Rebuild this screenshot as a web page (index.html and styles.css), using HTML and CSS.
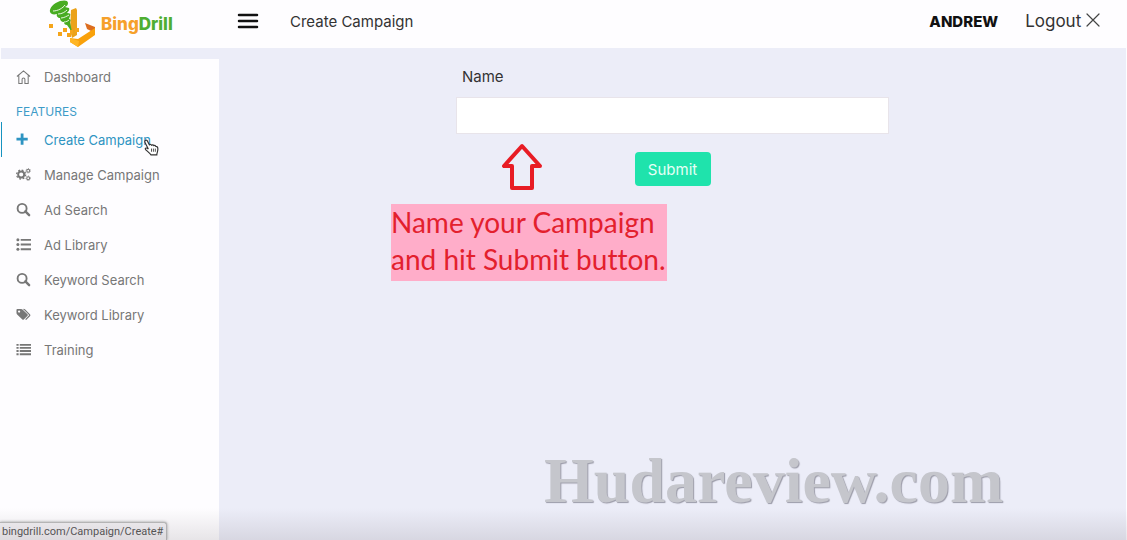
FILE: index.html
```html
<!DOCTYPE html>
<html lang="en">
<head>
  <meta charset="UTF-8">
  <meta name="viewport" content="width=device-width, initial-scale=1.0">
  <title>Create Campaign - BingDrill</title>
  <link rel="stylesheet" href="styles.css">
</head>
<body>

<header class="topbar">
  <a class="brand" href="#">
    <svg class="brand-logo" width="50" height="48" viewBox="0 0 50 48" aria-hidden="true">
      <path d="M22 10l5-2 1 2v25l-5 3-2-8z" fill="#eba21a"/>
      <path d="M36 23l10 4v6l-8-4z" fill="#dc6d20"/>
      <path d="M21 38l8 1 17-11v7L29 47l-8-5z" fill="#f9a10b"/>
      <path d="M21 38l9 3-1 6-8-5z" fill="#ffb524"/>
      <path d="M1 12C0 8 5 3 11 1c4-1 8-1 8 2 0 2-1 3-3 4l4 1c1 2-1 4-2 5 3 0 4 1 3 3l-1 3c2 0 2 2 1 3l2 10-5-7c-2 0-3-1-3-3-3 0-4-2-4-4-2 0-4-2-3-4-4 1-6 0-7-2z" fill="#48ac22"/>
      <path d="M4 11c5 0 10-3 12-6M9 14c4 0 7-2 9-4M12 18c3 0 6-2 8-3M15 22c2 0 4-1 5-2" fill="none" stroke="#e8f6df" stroke-width="1"/>
      <path d="M0 24h4v4H0zM9 32h4v4H9zM14 28h4v4h-4zM18 33h4v4h-4zM26 28h4v4h-4zM21 30h3v4h-3z" fill="#f5a51b"/>
    </svg>
    <span class="brand-name">Bing<span>Drill</span></span>
  </a>
  <button class="menu-toggle" type="button" aria-label="Toggle menu">
    <svg width="22" height="16" viewBox="0 0 22 16">
      <path d="M2 2h18M2 8h18M2 14h18" stroke="#111" stroke-width="2.500" stroke-linecap="round"/>
    </svg>
  </button>
  <h1>Create Campaign</h1>
  <div class="account">
    <strong>ANDREW</strong>
    <a href="#">Logout
      <svg width="14" height="14" viewBox="0 0 14 14" aria-hidden="true">
        <path d="M1 1l12 12M13 1L1 13" stroke="#444" stroke-width="1.200" stroke-linecap="round"/>
      </svg>
    </a>
  </div>
</header>

<div class="page">
  <nav class="sidebar">
    <a href="#">
      <svg viewBox="0 0 16 16"><path d="M1 8 8 2l7 6M3 7v8.500h3.500V11a1.500 1.500 0 0 1 3 0v4.500H13V7" fill="none" stroke="currentColor" stroke-width="1.100"/></svg>
      Dashboard
    </a>
    <h2>FEATURES</h2>
    <a class="active" href="#">
      <svg viewBox="0 0 16 16"><path d="M6.500 1.500v12M.5 7.500h12" stroke="currentColor" stroke-width="3"/></svg>
      <span class="hovered">Create Campaign
        <svg class="cursor" viewBox="0 0 14 16"><path d="M1 1.500c1-1 2 0 2.500 1L5 5.500c1-.8 1.800-.3 2 .3.900-.6 1.700-.2 2 .4 1-.4 1.700.1 2 .7 1.600-.1 2 1.200 2 2.600 0 2.500-1 3.500-1 5.500H6.500C5 13 3 11.500 1.500 10c-1-1.200.2-2 1.500-1.200l1 .7L1 3.500c-.4-.8-.4-1.500 0-2z" fill="#fff" stroke="#333" stroke-width="1.100"/><path d="M7 9v3M8.800 9v3M10.600 9v3" stroke="#333" stroke-width=".8"/></svg>
      </span>
    </a>
    <a href="#">
      <svg viewBox="0 0 16 16"><g fill="none" stroke="currentColor"><circle cx="5.500" cy="8" r="3.200" stroke-width="2"/><circle cx="5.500" cy="8" r="4.800" stroke-width="1.400" stroke-dasharray="1.900 1.870"/><circle cx="13" cy="4" r="1.500" stroke-width="1.100"/><circle cx="13" cy="4" r="2.400" stroke-width=".8" stroke-dasharray="1 1"/><circle cx="13" cy="12" r="1.500" stroke-width="1.100"/><circle cx="13" cy="12" r="2.400" stroke-width=".8" stroke-dasharray="1 1"/></g></svg>
      Manage Campaign
    </a>
    <a href="#">
      <svg viewBox="0 0 16 16"><path d="M10 10l4 4" stroke="currentColor" stroke-width="2.600" stroke-linecap="round"/><circle cx="6.500" cy="6.800" r="4.800" fill="none" stroke="currentColor" stroke-width="2"/></svg>
      Ad Search
    </a>
    <a href="#">
      <svg viewBox="0 0 16 16"><path d="M5 3h11M5 8h11M5 13h11" stroke="currentColor" stroke-width="2"/><g fill="currentColor"><circle cx="2" cy="3" r="1.600"/><circle cx="2" cy="8" r="1.600"/><circle cx="2" cy="13" r="1.600"/></g></svg>
      Ad Library
    </a>
    <a href="#">
      <svg viewBox="0 0 16 16"><path d="M10 10l4 4" stroke="currentColor" stroke-width="2.600" stroke-linecap="round"/><circle cx="6.500" cy="6.800" r="4.800" fill="none" stroke="currentColor" stroke-width="2"/></svg>
      Keyword Search
    </a>
    <a href="#">
      <svg viewBox="0 0 16 16"><path fill-rule="evenodd" d="M.5 3c0-.6.400-1 1-1h4c.5 0 1 .2 1.400.6l5.400 5.200c.5.500.5 1 0 1.500l-4 4c-.5.500-1 .5-1.500 0L1.200 8C.8 7.600.5 7 .5 6.500zM3.300 6a1.200 1.200 0 1 0 0-2.400 1.200 1.200 0 0 0 0 2.400z" fill="currentColor"/><path d="M8 2.500c.6 0 1 .2 1.400.6l5 5c.4.400.4.800 0 1.200L10.300 13.500" fill="none" stroke="currentColor" stroke-width="1.300"/></svg>
      Keyword Library
    </a>
    <a href="#">
      <svg viewBox="0 0 16 16"><path d="M4 3h12M4 6.300h12M4 9.600h12M4 13h12" stroke="currentColor" stroke-width="2"/><path d="M.5 3h2.300M.5 6.300h2.300M.5 9.600h2.300M.5 13h2.300" stroke="currentColor" stroke-width="2"/></svg>
      Training
    </a>
  </nav>

  <main>
    <form class="campaign-form">
      <label for="name">Name</label>
      <input type="text" id="name">
      <button type="submit">Submit</button>
    </form>
  </main>
</div>

<!-- Tutorial notes over the page -->
<svg class="arrow" width="42" height="48" viewBox="0 0 42 48" aria-hidden="true">
  <path d="M21 3L3 23h8v22h20V23h8z" fill="none" stroke="#e81c24" stroke-width="4" stroke-linejoin="round"/>
</svg>
<p class="note">Name your Campaign<br>and hit Submit button.</p>
<div class="watermark">Hudareview.com</div>
<div class="status">bingdrill.com/Campaign/Create#</div>

</body>
</html>
```
FILE: styles.css
```css
* {
  box-sizing: border-box;
}
body {
  margin: 0;
  min-height: 100vh;
  display: flex;
  flex-direction: column;
  position: relative;
  overflow: hidden;
  background-color: #fefdff;
  color: #333;
  font-family: Inter, "Liberation Sans", sans-serif;
  font-size: 13px;
}
body::after {
  content: "";
  position: absolute;
  left: 0;
  right: 0;
  bottom: 0;
  height: 32px;
  background: linear-gradient(rgba(90, 80, 90, 0), rgba(90, 80, 90, 0.14));
}
a {
  color: inherit;
  text-decoration: none;
}

/* Header */
.topbar {
  display: flex;
  align-items: center;
  height: 48px;
  padding: 0 27px 6px 49px;
}
.brand {
  display: flex;
  align-items: center;
  width: 188px;
  height: 42px;
}
.brand-logo {
  flex: none;
  margin-top: 5px;
}
.brand-name {
  margin-top: 5px;
  margin-left: 2px;
  color: #f6a02a;
  font-size: 17px;
  font-weight: 800;
}
.brand-name span {
  color: #4fae32;
}
.menu-toggle {
  display: flex;
  width: 53px;
  padding: 0;
  border: none;
  background: none;
  cursor: pointer;
}
.topbar h1 {
  margin: 0;
  font-size: 15px;
  font-weight: 400;
}
.account {
  display: flex;
  align-items: center;
  gap: 27px;
  margin-left: auto;
}
.account strong {
  color: #111;
  font-size: 15px;
  font-weight: 800;
}
.account a {
  font-size: 17px;
}

/* Page */
.page {
  flex: 1;
  display: flex;
  margin: 0 1px;
  background-color: #ecedf8;
}
.sidebar {
  flex: none;
  width: 218px;
  margin-top: 11px;
  background-color: #fefdff;
  color: #777;
}
.sidebar a {
  display: flex;
  align-items: center;
  gap: 13px;
  height: 35px;
  padding-left: 15px;
}
.sidebar svg {
  flex: none;
  width: 15px;
  height: 15px;
}
.sidebar h2 {
  margin: 0;
  padding: 10px 0 2px 15px;
  color: #3d9bc8;
  font-size: 12px;
  line-height: 16px;
  font-weight: 400;
}
.sidebar .active {
  padding-left: 14px;
  border-left: 1px solid #1793c0;
  color: #2e94c2;
}
.hovered {
  position: relative;
}
.sidebar .cursor {
  position: absolute;
  right: -8px;
  top: 7px;
  height: 17px;
}
main {
  flex: 1;
  padding: 18px 20px;
}
.campaign-form {
  display: flex;
  flex-direction: column;
  max-width: 433px;
  margin: 0 auto;
}
.campaign-form label {
  padding-left: 6px;
  font-size: 15px;
  line-height: 22px;
}
.campaign-form input {
  width: 100%;
  height: 37px;
  margin: 9px 0 18px;
  padding: 0 12px;
  border: 1px solid #e8e4ea;
  background-color: #fff;
  font: inherit;
}
.campaign-form button {
  align-self: center;
  width: 76px;
  height: 34px;
  border: none;
  border-radius: 4px;
  background-color: #1fe3ac;
  color: #e6fff6;
  font-family: inherit;
  font-size: 15px;
  cursor: pointer;
}

/* Notes */
.arrow {
  position: absolute;
  left: 501px;
  top: 143px;
}
.note {
  position: absolute;
  left: 391px;
  top: 204px;
  margin: 0;
  padding: 0 1px 3px 0;
  background-color: #ffadc9;
  color: #e3202d;
  font-family: Lato, "Open Sans", sans-serif;
  font-size: 28px;
  line-height: 37px;
  font-variant-ligatures: none;
  white-space: nowrap;
}
.watermark {
  position: absolute;
  left: 544px;
  bottom: 22px;
  color: #c5c6cc;
  font-family: "Liberation Serif", serif;
  font-size: 64px;
  font-weight: 700;
  text-shadow: 1px 1px 1px #9b9ba8;
}
.status {
  position: absolute;
  left: 0;
  bottom: 0;
  padding: 2px 3px 1px 2px;
  border: 1px solid #bbb;
  border-width: 1px 1px 0 0;
  border-top-right-radius: 3px;
  background-color: #f3f1f4;
  box-shadow: 0 0 3px #999;
  color: #555;
  font-family: Roboto, sans-serif;
  font-size: 11px;
  line-height: 14px;
}
```
